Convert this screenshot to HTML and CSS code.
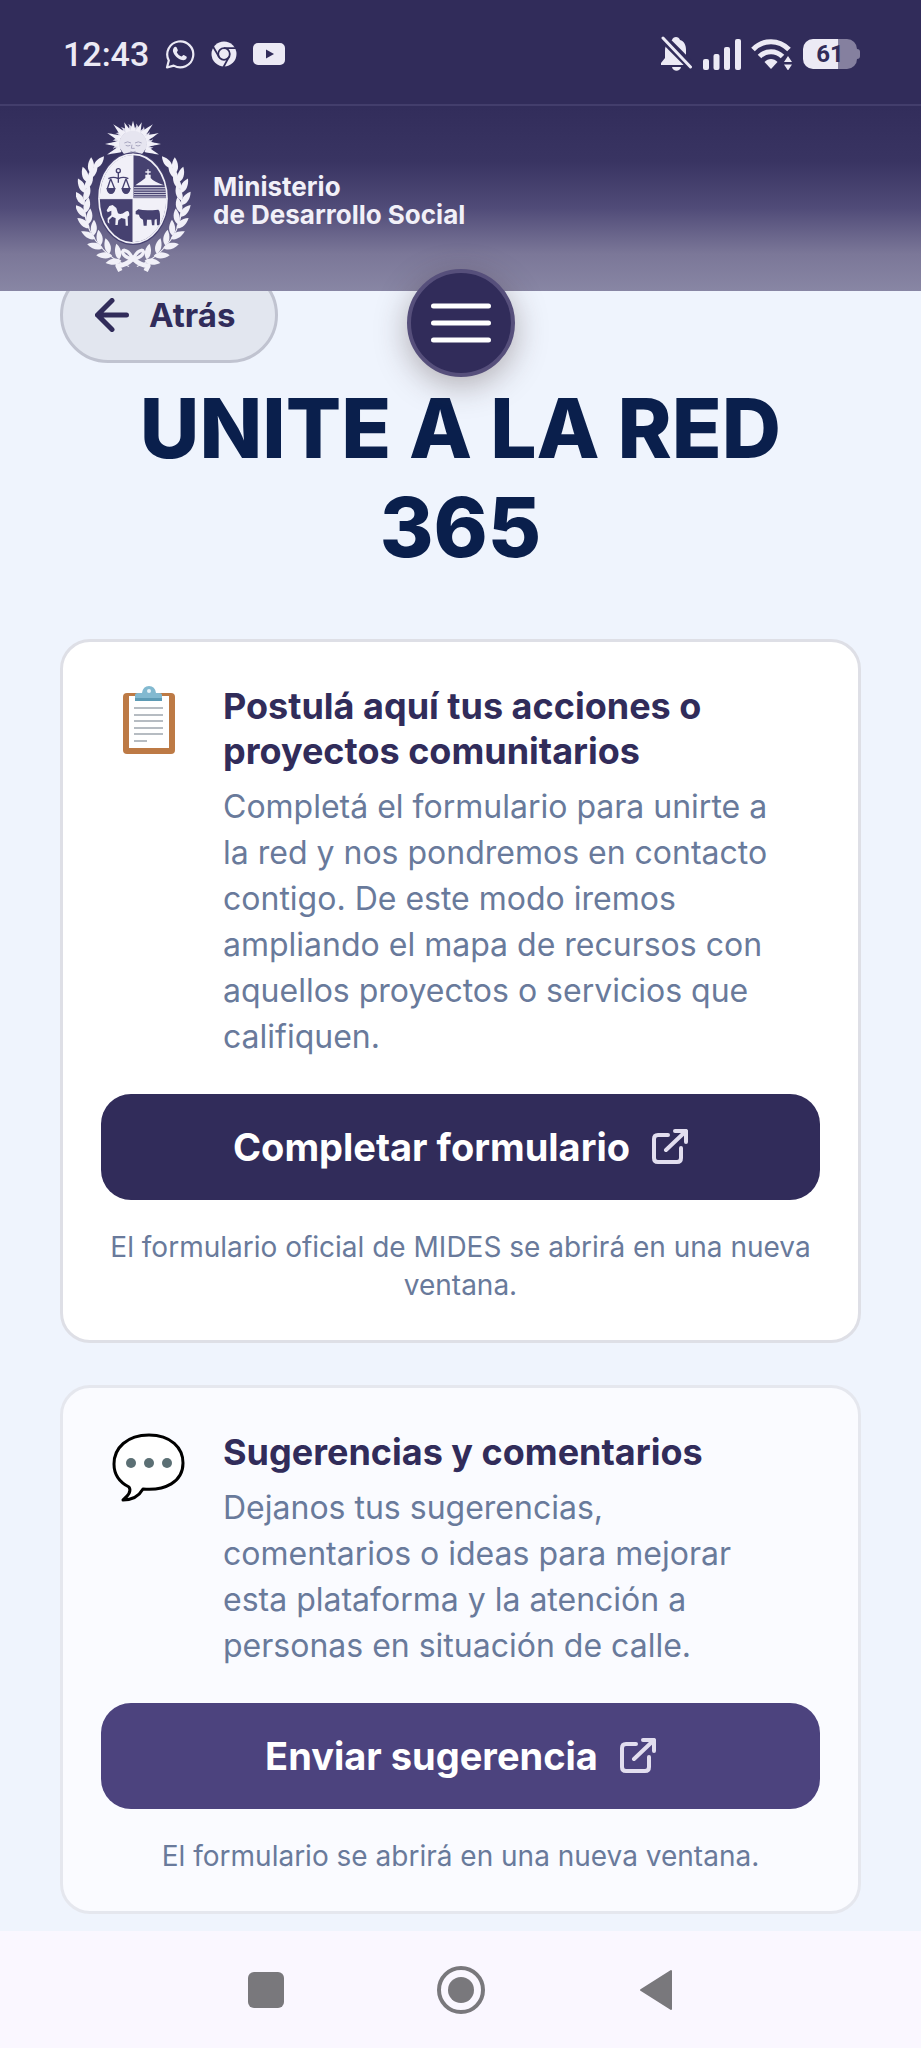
FILE: index.html
```html
<!DOCTYPE html>
<html lang="es">
  <head>
    <meta charset="UTF-8" />
    <meta name="viewport" content="width=device-width, initial-scale=1.0" />
    <title>Unite a la Red 365</title>
    <link rel="stylesheet" href="styles.css">
  </head>
  <body>
    <div class="status-bar">
      <div class="status-left">
        <span class="clock">12:43</span>
        <svg width="30" height="30" viewBox="0 0 30 30" aria-hidden="true">
          <path d="M2 28.500 3.800 21.500A13 13 0 1 1 8.700 26.600Z" fill="none" stroke="currentColor" stroke-width="2.200" stroke-linejoin="round" />
          <path d="M9 8.500c1-1 2.400-.8 2.800.2l1 2.300c.3.800-1.100 1.900-.9 2.500 1 2 2.400 3.200 4.500 4 .7.200 1.500-1.700 2.400-1.400l2.600 1.300c.8.500.2 2.300-.8 3-2 1.400-4.500.7-7.200-1-2.500-1.700-5.300-5-5.500-7.700 0-1.300.4-2.400 1.100-3.200z" fill="currentColor" />
        </svg>
        <svg class="chrome-icon" width="26" height="26" viewBox="0 0 26 26" aria-hidden="true">
          <circle cx="13" cy="13" r="12.500" fill="currentColor" />
          <g fill="none" stroke="#312c5a" stroke-width="1.800">
            <circle cx="13" cy="13" r="5.800" />
            <path d="M13 7.200H25M8 15.900 2 5.500M18 15.900 12.500 26" />
          </g>
        </svg>
        <svg width="32" height="24" viewBox="0 0 32 24" aria-hidden="true">
          <rect y="1" width="32" height="22" rx="5" fill="currentColor" />
          <path d="M13 7.500v9l8-4.500z" fill="#312c5a" />
        </svg>
      </div>
      <div class="status-right">
        <svg width="32" height="36" viewBox="0 0 32 36" aria-hidden="true">
          <path d="M0 29v-2l4-5v-7C4 8 8 5 11 4c1-4 7-4 8 0 4 1 6 5 6 10v8l5 5v2z" fill="currentColor" />
          <path d="M11 31h9c-1 5-8 5-9 0z" fill="currentColor" />
          <path d="M-1-1 33 33" stroke="#312c5a" stroke-width="9" />
          <path d="M2 2 29.500 31" stroke="currentColor" stroke-width="3" stroke-linecap="round" />
        </svg>
        <svg width="38" height="31" viewBox="0 0 38 31" fill="currentColor" aria-hidden="true">
          <rect y="20" width="6" height="11" rx="2" />
          <rect x="10.500" y="15" width="6" height="16" rx="2" />
          <rect x="21" y="8" width="6" height="23" rx="2" />
          <rect x="32" width="6" height="31" rx="2" />
        </svg>
        <svg width="42" height="32" viewBox="0 0 42 32" aria-hidden="true">
          <g fill="none" stroke="currentColor" stroke-width="5">
            <path d="M2 11.500C12 1 28 1 38 11.500" />
            <path d="M8.500 18.500C15 12 25 12 31.500 18.500" />
          </g>
          <path d="M13.500 24c3.500-4 9.500-4 13 0L20 31z" fill="currentColor" />
          <circle cx="37" cy="25" r="7" fill="#312c5a" />
          <path d="M33 24l4-6 4 6zM33 26.500l4 6 4-6z" fill="currentColor" />
        </svg>
        <span class="battery">61</span>
      </div>
    </div>

    <header class="site-header">
      <a class="brand" href="#">
        <svg class="emblem" width="115" height="155" viewBox="78 57 345 465" aria-hidden="true">
          <defs>
            <path id="leaf" d="M0 0C11-9 13-28 0-45C-11-28-11-9 0 0Z" />
            <path id="ray" d="M-9-34C-7-46-4-52 0-70C4-54 7-46 9-34Z" />
            <path id="flame" d="M-7-34C-11-45 5-50-3-62C9-54 10-44 8-34Z" />
            <g id="branch">
              <path d="M238 486C180 465 108 400 111 306Q113 245 140 205" fill="none" stroke="#f1f0f8" stroke-width="3" />
              <use href="#leaf" transform="translate(216 470) rotate(-98)" />
              <use href="#leaf" transform="translate(190 456) rotate(-88)" />
              <use href="#leaf" transform="translate(163 434) rotate(-76)" />
              <use href="#leaf" transform="translate(142 408) rotate(-62)" />
              <use href="#leaf" transform="translate(126 378) rotate(-50)" />
              <use href="#leaf" transform="translate(116 346) rotate(-42)" />
              <use href="#leaf" transform="translate(111 312) rotate(-34)" />
              <use href="#leaf" transform="translate(113 278) rotate(-26)" />
              <use href="#leaf" transform="translate(119 247) rotate(-16)" />
              <use href="#leaf" transform="translate(129 222) rotate(2)" />
              <use href="#leaf" transform="translate(138 209) rotate(40)" />
              <use href="#leaf" transform="translate(210 466) rotate(-10)" />
              <use href="#leaf" transform="translate(182 450) rotate(-14)" />
              <use href="#leaf" transform="translate(157 427) rotate(-8)" />
              <use href="#leaf" transform="translate(137 399) rotate(2)" />
              <use href="#leaf" transform="translate(122 367) rotate(8)" />
              <use href="#leaf" transform="translate(114 334) rotate(12)" />
              <use href="#leaf" transform="translate(111 300) rotate(20)" />
              <use href="#leaf" transform="translate(114 267) rotate(28)" />
              <use href="#leaf" transform="translate(122 238) rotate(36)" />
            </g>
            <clipPath id="shield"><ellipse cx="249" cy="296" rx="100" ry="131" /></clipPath>
          </defs>
          <g fill="#d8d7e6" transform="translate(249 132)">
            <use href="#flame" transform="rotate(-101)" />
            <use href="#flame" transform="rotate(-79)" />
            <use href="#flame" transform="rotate(-56)" />
            <use href="#flame" transform="rotate(-34)" />
            <use href="#flame" transform="rotate(-11)" />
            <use href="#flame" transform="rotate(11)" />
            <use href="#flame" transform="rotate(34)" />
            <use href="#flame" transform="rotate(56)" />
            <use href="#flame" transform="rotate(79)" />
            <use href="#flame" transform="rotate(101)" />
          </g>
          <g fill="#f1f0f8" transform="translate(249 132)">
            <use href="#ray" transform="rotate(-112) scale(1 1.200)" />
            <use href="#ray" transform="rotate(-90) scale(1 1.200)" />
            <use href="#ray" transform="rotate(-67) scale(1 1.200)" />
            <use href="#ray" transform="rotate(-45) scale(1 1.200)" />
            <use href="#ray" transform="rotate(-22)" />
            <use href="#ray" />
            <use href="#ray" transform="rotate(22)" />
            <use href="#ray" transform="rotate(45) scale(1 1.200)" />
            <use href="#ray" transform="rotate(67) scale(1 1.200)" />
            <use href="#ray" transform="rotate(90) scale(1 1.200)" />
            <use href="#ray" transform="rotate(112) scale(1 1.200)" />
            <circle r="40" fill="#e6e5f0" />
            <g fill="none" stroke="#a9a7c0" stroke-width="3">
              <path d="M-26-3Q-16-10-6-3M6-3Q16-10 26-3M-22 4Q-15 8-8 4M8 4Q15 8 22 4M-3 2-5 13H5M-8 22Q0 27 8 22" />
            </g>
          </g>
          <g fill="#f1f0f8" transform="translate(-15 -16) scale(1.060)">
            <use href="#branch" />
            <use href="#branch" transform="translate(498 0) scale(-1 1)" />
          </g>
          <ellipse cx="249" cy="296" rx="108" ry="139" fill="#464170" />
          <g clip-path="url(#shield)">
            <path d="M145 160H249V296H145ZM249 296H353V432H249Z" fill="#f1f0f8" />
            <path d="M256 256Q276 242 286 234V224H302V234Q312 246 342 256Z" fill="#f1f0f8" />
            <path d="M294 208V226M286 216H302" stroke="#f1f0f8" stroke-width="4" />
            <path d="M252 263H348M252 270H350M252 277H350M252 284H350M252 291H350" stroke="#d8d7e6" stroke-width="3" />
          </g>
          <g fill="none" stroke="#464170" stroke-width="4">
            <circle cx="205" cy="212" r="6" />
            <path d="M205 218V248M175 236Q190 228 205 236Q220 228 235 236M182 236 172 266M182 236 194 266M228 236 217 266M228 236 239 266" />
          </g>
          <path d="M169 264H197Q194 282 183 282Q172 282 169 264ZM214 264H242Q239 282 228 282Q217 282 214 264Z" fill="#464170" />
          <path d="M170 331 178 318 188 315 199 324 204 340Q214 345 226 335Q238 328 238 346L233 350 234 377H227L226 357 214 354 205 361 203 375H196L197 355 187 350 177 360 178 371 173 367V355L184 345 184 332 173 337Z" fill="#f1f0f8" />
          <path d="M257 334 265 328Q284 333 325 329Q333 333 329 376H321L320 357 314 359 313 376H306L304 359H291L290 377H281L279 359Q268 354 267 344L257 343Z" fill="#464170" />
          <path d="M249 161V430M146 296H352" stroke="#f1f0f8" stroke-width="3" />
          <ellipse cx="249" cy="296" rx="102" ry="133" fill="none" stroke="#f1f0f8" stroke-width="5" />
          <g fill="none" stroke="#f1f0f8" stroke-width="10" stroke-linejoin="round">
            <path d="M249 478C232 440 208 448 222 465Q232 475 249 478C266 440 290 448 276 465Q266 475 249 478" />
            <path d="M246 478Q228 496 203 497L211 513M252 478Q270 496 295 497L287 513" stroke-width="14" />
          </g>
        </svg>
        <span class="brand-name">Ministerio<br>de Desarrollo Social</span>
      </a>
      <button class="menu-btn" type="button" aria-label="Menú">
        <svg width="60" height="40" viewBox="0 0 60 40" aria-hidden="true">
          <path d="M2.500 3H57.500M2.500 20H57.500M2.500 37H57.500" stroke="#fff" stroke-width="5" stroke-linecap="round" />
        </svg>
      </button>
    </header>

    <main class="content">
      <a class="back-btn" href="#">
        <svg width="34" height="34" viewBox="0 0 34 34" aria-hidden="true">
          <path d="M17 2.500 2.500 17 17 31.500M2.500 17H31.500" fill="none" stroke="currentColor" stroke-width="5" stroke-linecap="round" stroke-linejoin="round" />
        </svg>
        Atrás
      </a>

      <h1>UNITE A LA RED 365</h1>

      <section class="card">
        <div class="card-body">
          <svg class="card-icon" width="76" height="76" viewBox="0 0 76 76" aria-hidden="true">
            <rect x="12" y="9" width="52" height="61" rx="4" fill="#bd7a45" />
            <path d="M18 12H58V64H18Z" fill="#fff" />
            <path d="M23 24H52M23 31H52M23 37H52M23 44H52M23 50H52M23 57H36" stroke="#b6bcc2" stroke-width="2" />
            <path d="M24 17V11Q24 9 27 9H31Q32 2 38 2Q44 2 45 9H48Q51 9 51 11V17Z" fill="#82b9d0" />
            <path d="M24 14H51V17H24Z" fill="#5d9bb5" />
            <circle cx="38" cy="7" r="2" fill="#e6f3f8" />
          </svg>
          <div>
            <h2>Postulá aquí tus acciones o proyectos comunitarios</h2>
            <p>Completá el formulario para unirte a la red y nos pondremos en contacto contigo. De este modo iremos ampliando el mapa de recursos con aquellos proyectos o servicios que califiquen.</p>
          </div>
        </div>
        <a class="btn" href="#">
          Completar formulario
          <svg width="36" height="36" viewBox="0 0 36 36" aria-hidden="true">
            <path d="M16 6H6Q2 6 2 10V29Q2 33 6 33H25Q29 33 29 29V19M23 2H34V13M34 2 14 21" fill="none" stroke="currentColor" stroke-width="4" stroke-linecap="round" stroke-linejoin="round" />
          </svg>
        </a>
        <p class="note">El formulario oficial de MIDES se abrirá en una nueva ventana.</p>
      </section>

      <section class="card card-soft">
        <div class="card-body">
          <svg class="card-icon" width="76" height="76" viewBox="0 0 76 76" aria-hidden="true">
            <path d="M38 5C60 5 72 18 72 33C72 52 54 61 32 59C28 66 21 70 12 70C18 65 20 60 18 57C8 52 3 44 3 34C3 18 16 5 38 5Z" fill="#fff" stroke="#000" stroke-width="3" stroke-linejoin="round" />
            <g fill="#5b6f74">
              <circle cx="20" cy="33" r="5" />
              <circle cx="38" cy="33" r="5" />
              <circle cx="56" cy="33" r="5" />
            </g>
          </svg>
          <div>
            <h2>Sugerencias y comentarios</h2>
            <p>Dejanos tus sugerencias, comentarios o ideas para mejorar esta plataforma y la atención a personas en situación de calle.</p>
          </div>
        </div>
        <a class="btn btn-secondary" href="#">
          Enviar sugerencia
          <svg width="36" height="36" viewBox="0 0 36 36" aria-hidden="true">
            <path d="M16 6H6Q2 6 2 10V29Q2 33 6 33H25Q29 33 29 29V19M23 2H34V13M34 2 14 21" fill="none" stroke="currentColor" stroke-width="4" stroke-linecap="round" stroke-linejoin="round" />
          </svg>
        </a>
        <p class="note">El formulario se abrirá en una nueva ventana.</p>
      </section>
    </main>

    <nav class="system-nav">
      <button type="button" aria-label="Recientes">
        <svg width="48" height="48" viewBox="0 0 48 48"><rect x="6" y="6" width="36" height="36" rx="6" fill="currentColor" /></svg>
      </button>
      <button type="button" aria-label="Inicio">
        <svg width="48" height="48" viewBox="0 0 48 48">
          <circle cx="24" cy="24" r="22" fill="none" stroke="currentColor" stroke-width="4" />
          <circle cx="24" cy="24" r="13" fill="currentColor" />
        </svg>
      </button>
      <button type="button" aria-label="Volver">
        <svg width="48" height="48" viewBox="0 0 48 48"><path d="M9 24 39 5V43Z" fill="currentColor" stroke="currentColor" stroke-width="2" stroke-linejoin="round" /></svg>
      </button>
    </nav>
  </body>
</html>
```
FILE: styles.css
```css
* {
  box-sizing: border-box;
}
body {
  margin: 0;
  min-height: 100vh;
  display: flex;
  flex-direction: column;
  font-family: Inter, "Liberation Sans", sans-serif;
  color: #312c5a;
  background: #eff4fd;
}
h1,
h2,
p {
  margin: 0;
}
a {
  color: inherit;
  text-decoration: none;
}
svg {
  display: block;
  flex: none;
}

/* status bar */
.status-bar {
  display: flex;
  justify-content: space-between;
  align-items: center;
  height: 104px;
  padding: 4px 64px 0 63px;
  background: #312c5a;
  color: #eceaf5;
}
.status-left,
.status-right {
  display: flex;
  align-items: center;
}
.status-left {
  gap: 16px;
}
.status-right {
  gap: 10px;
}
.clock {
  font: 500 34px/40px Roboto, sans-serif;
}
.battery {
  position: relative;
  width: 54px;
  height: 30px;
  border-radius: 10px;
  background: linear-gradient(to right, #eceaf5 64%, #85809f 64%);
  color: #312c5a;
  font: 700 24px/30px Roboto, sans-serif;
  text-align: center;
}
.battery::after {
  content: "";
  position: absolute;
  left: 54px;
  top: 10px;
  width: 3px;
  height: 10px;
  border-radius: 0 3px 3px 0;
  background: #85809f;
}

/* header */
.site-header {
  position: relative;
  z-index: 2;
  padding: 13px 76px 17px;
  border-top: 2px solid #433e6c;
  background: linear-gradient(#322d5b, #393462 30%, #504b78 55%, #7b7798 80%, #8886a4);
}
.brand {
  display: flex;
  align-items: center;
  gap: 22px;
  color: #f1f0f8;
}
.brand-name {
  padding-top: 8px;
  font-size: 26px;
  font-weight: 700;
  line-height: 28px;
}
.menu-btn {
  position: absolute;
  left: 50%;
  bottom: -86px;
  transform: translateX(-50%);
  display: flex;
  align-items: center;
  justify-content: center;
  width: 108px;
  height: 108px;
  padding: 0;
  border: 4px solid #564f7b;
  border-radius: 50%;
  background: #312c5a;
  box-shadow: 0 8px 32px rgba(60, 40, 40, 0.35);
  cursor: pointer;
}

/* content */
.content {
  margin-top: -24px;
  padding: 0 60px 17px;
}
.back-btn {
  display: inline-flex;
  align-items: center;
  gap: 20px;
  height: 96px;
  padding: 0 40px 0 32px;
  border: 3px solid #c0c3d0;
  border-radius: 48px;
  background: #e2e6ef;
  font-size: 33px;
  font-weight: 700;
}
h1 {
  margin: 16px 0 62px;
  padding: 0 32px;
  color: #0a1f4c;
  font-size: 82px;
  font-weight: 800;
  line-height: 99px;
  text-align: center;
}
.card {
  padding: 42px 38px 36px;
  border: 3px solid #dedfe6;
  border-radius: 30px;
  background: #fff;
}
.card + .card {
  margin-top: 42px;
}
.card-soft {
  border-color: #e5e7ee;
  background: #fafbff;
}
.card-body {
  display: flex;
  gap: 36px;
  padding: 0 26px 0 10px;
}
.card h2 {
  margin-bottom: 10px;
  font-size: 36px;
  font-weight: 700;
  line-height: 45px;
}
.card-body p {
  color: #697a9b;
  font-size: 32px;
  line-height: 46px;
}
.btn {
  display: flex;
  align-items: center;
  justify-content: center;
  gap: 22px;
  height: 106px;
  margin-top: 34px;
  border-radius: 30px;
  background: #312c5a;
  color: #fff;
  font-size: 38px;
  font-weight: 700;
}
.btn svg {
  color: #e2deef;
}
.btn-secondary {
  background: #4c437e;
}
.note {
  margin-top: 28px;
  color: #697a9b;
  font-size: 28px;
  line-height: 38px;
  text-align: center;
}

/* system navigation */
.system-nav {
  display: flex;
  justify-content: center;
  align-items: center;
  gap: 147px;
  height: 118px;
  margin-top: auto;
  background: #faf7ff;
  color: #79787c;
}
.system-nav button {
  padding: 0;
  border: 0;
  background: none;
  color: inherit;
}
```
